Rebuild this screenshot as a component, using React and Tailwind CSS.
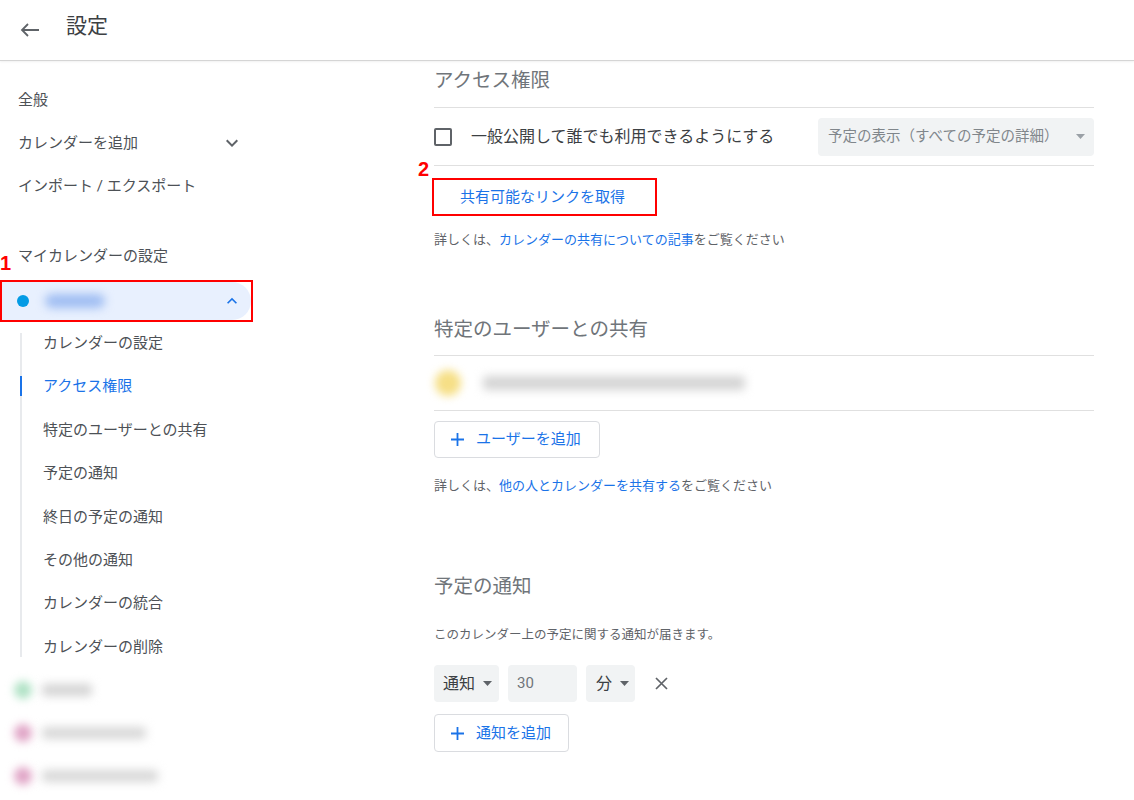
import React from "react";

const BackArrow = () => (
  <svg width="20" height="14" viewBox="0 0 20 14" fill="none">
    <path d="M19 7H2M8 1L2 7L8 13" stroke="#5f6368" strokeWidth="1.8" strokeLinejoin="miter" />
  </svg>
);

const ExpandMore = ({ color = "#5f6368", size = 24 }) => (
  <svg width={size} height={size} viewBox="0 0 24 24">
    <path d="M16.59 8.59L12 13.17 7.41 8.59 6 10l6 6 6-6z" fill={color} />
  </svg>
);

const ExpandLess = ({ color = "#1a73e8", size = 20 }) => (
  <svg width={size} height={size} viewBox="0 0 24 24">
    <path d="M12 8l-6 6 1.41 1.41L12 10.83l4.59 4.58L18 14z" fill={color} />
  </svg>
);

const Tri = ({ color = "#5f6368" }) => (
  <svg width="9" height="5" viewBox="0 0 9 5">
    <path d="M0 0L4.5 5L9 0Z" fill={color} />
  </svg>
);

const Plus = () => (
  <svg width="13" height="13" viewBox="0 0 13 13">
    <path d="M6.5 0V13M0 6.5H13" stroke="#1a73e8" strokeWidth="1.8" />
  </svg>
);

const Close = () => (
  <svg width="13" height="13" viewBox="0 0 13 13">
    <path d="M1 1L12 12M12 1L1 12" stroke="#5f6368" strokeWidth="1.7" />
  </svg>
);

const subItems = [
  "カレンダーの設定",
  "アクセス権限",
  "特定のユーザーとの共有",
  "予定の通知",
  "終日の予定の通知",
  "その他の通知",
  "カレンダーの統合",
  "カレンダーの削除",
];

export default function App() {
  return (
    <div className="w-[1134px] h-[800px] overflow-hidden bg-white font-[Roboto,'Noto_Sans_CJK_JP',sans-serif] text-[#3c4043]">
      {/* Header */}
      <header className="h-[61px] flex items-center border-b border-[#d5d5d5] shadow-[0_1px_2px_rgba(0,0,0,0.06)]">
        <div className="w-[66px] flex justify-center pr-[6px]">
          <BackArrow />
        </div>
        <h1 className="text-[21px] leading-[28px] text-[#3c4043] -mt-[9px]">設定</h1>
      </header>

      <div className="flex">
        {/* Sidebar */}
        <aside className="w-[256px] shrink-0 pt-[17.5px] text-[#4d5156]">
          <div className="flex flex-col">
            <div className="h-[43px] flex items-center pl-[18px] text-[15px]">全般</div>
            <div className="h-[43px] flex items-center pl-[18px] pr-[12px] text-[15px] justify-between">
              <span>カレンダーを追加</span>
              <ExpandMore />
            </div>
            <div className="h-[43px] flex items-center pl-[18px] text-[15px]">インポート / エクスポート</div>
          </div>

          <div className="relative mt-[37.5px] h-[22px] flex items-center pl-[18px] text-[15px]">
            マイカレンダーの設定
          </div>

          <div className="relative mt-[13px] w-[253px] h-[42px] border-2 border-[#ff0000]">
            <span className="absolute -left-[2px] -top-[29px] text-[20px] leading-[20px] font-bold text-[#ff0000] font-['Liberation_Sans',sans-serif]">
              1
            </span>
            <div className="h-full w-[249px] rounded-r-full bg-[#e8f0fe] flex items-center pl-[15px] pr-[9px]">
              <div className="w-[12px] h-[12px] rounded-full bg-[#039be5]" />
              <div className="ml-[16px] w-[60px] h-[14px] rounded-full bg-[#9fbdf2] blur-[5px]" />
              <div className="ml-auto flex">
                <ExpandLess />
              </div>
            </div>
          </div>

          <div className="mt-[11px] ml-[20px] border-l-2 border-[#e8eaed] flex flex-col gap-[23.4px]">
            {subItems.map((t, i) => (
              <div
                key={t}
                className={
                  i === 1
                    ? "-ml-[2px] border-l-2 border-[#1a73e8] h-[20px] leading-[20px] pl-[21px] text-[15px] text-[#1a73e8]"
                    : "h-[20px] leading-[20px] pl-[21px] text-[15px]"
                }
              >
                {t}
              </div>
            ))}
          </div>

          <div className="mt-[11.5px] flex flex-col">
            <div className="h-[43px] flex items-center pl-[14px]">
              <div className="w-[18px] h-[18px] rounded-full bg-[#b0e2c5] blur-[4px]" />
              <div className="ml-[10px] w-[50px] h-[12px] rounded bg-[#d4d4d4] blur-[5px]" />
            </div>
            <div className="h-[43px] flex items-center pl-[14px]">
              <div className="w-[18px] h-[18px] rounded-full bg-[#e0a4c6] blur-[4px]" />
              <div className="ml-[10px] w-[104px] h-[12px] rounded bg-[#d8d8d8] blur-[5px]" />
            </div>
            <div className="h-[43px] flex items-center pl-[14px]">
              <div className="w-[18px] h-[18px] rounded-full bg-[#e0a4c6] blur-[4px]" />
              <div className="ml-[10px] w-[116px] h-[12px] rounded bg-[#d8d8d8] blur-[5px]" />
            </div>
          </div>
        </aside>

        {/* Main */}
        <main className="flex-1 pl-[178px] pt-[6px]">
          <div className="w-[660px]">
            <h2 className="h-[28px] leading-[28px] text-[19.5px] text-[#70757a]">アクセス権限</h2>
            <div className="mt-[12px] h-px bg-[#e0e0e0]" />
            <div className="h-[57px] flex items-center">
              <div className="w-[18px] h-[18px] rounded-[2px] border-2 border-[#5f6368]" />
              <span className="ml-[19px] text-[16px]">一般公開して誰でも利用できるようにする</span>
              <div className="ml-auto w-[276px] h-[38px] rounded-[4px] bg-[#f1f3f4] flex items-center pl-[10px] pr-[9px]">
                <span className="text-[14.5px] text-[#80868b]">予定の表示（すべての予定の詳細）</span>
                <div className="ml-auto">
                  <Tri color="#9aa0a6" />
                </div>
              </div>
            </div>
            <div className="h-px bg-[#e0e0e0]" />

            <div className="relative mt-[12px] -ml-[2px] w-[225px] h-[38px] border-2 border-[#ff0000]">
              <span className="absolute -left-[16px] -top-[21px] text-[20px] leading-[20px] font-bold text-[#ff0000] font-['Liberation_Sans',sans-serif]">
                2
              </span>
              <div className="h-full flex items-center pl-[26px] text-[15px] text-[#1a73e8]">
                共有可能なリンクを取得
              </div>
            </div>

            <p className="mt-[15px] h-[18px] leading-[18px] text-[13px] text-[#5f6368]">
              詳しくは、<span className="text-[#1a73e8]">カレンダーの共有についての記事</span>をご覧ください
            </p>

            <h2 className="mt-[67px] h-[28px] leading-[28px] text-[19.5px] text-[#70757a]">特定のユーザーとの共有</h2>
            <div className="mt-[11px] h-px bg-[#e0e0e0]" />
            <div className="h-[54px] flex items-center">
              <div className="ml-[1px] w-[26px] h-[26px] rounded-full bg-[#f6df86] blur-[4px]" />
              <div className="ml-[22px] w-[262px] h-[14px] rounded bg-[#d4d4d4] blur-[5px]" />
            </div>
            <div className="h-px bg-[#e0e0e0]" />

            <button className="mt-[10px] w-[166px] h-[37px] border border-[#dadce0] rounded-[4px] flex items-center pl-[16px]">
              <Plus />
              <span className="ml-[12px] text-[15px] text-[#1a73e8]">ユーザーを追加</span>
            </button>

            <p className="mt-[19px] h-[18px] leading-[18px] text-[13px] text-[#5f6368]">
              詳しくは、<span className="text-[#1a73e8]">他の人とカレンダーを共有する</span>をご覧ください
            </p>

            <h2 className="mt-[78px] h-[28px] leading-[28px] text-[19.5px] text-[#70757a]">予定の通知</h2>
            <p className="mt-[25px] h-[18px] leading-[18px] text-[12.5px] text-[#5f6368]">
              このカレンダー上の予定に関する通知が届きます。
            </p>

            <div className="mt-[21px] h-[37px] flex items-center">
              <div className="w-[65px] h-full rounded-[4px] bg-[#f1f3f4] flex items-center pl-[9px]">
                <span className="text-[16px] text-[#3c4043]">通知</span>
                <span className="ml-[8px]">
                  <Tri />
                </span>
              </div>
              <div className="ml-[9px] w-[69px] h-full rounded-[4px] bg-[#f1f3f4] flex items-center pl-[9px]">
                <span className="text-[15px] text-[#70757a]">30</span>
              </div>
              <div className="ml-[9px] w-[49px] h-full rounded-[4px] bg-[#f1f3f4] flex items-center pl-[10px]">
                <span className="text-[16px] text-[#3c4043]">分</span>
                <span className="ml-[8px]">
                  <Tri />
                </span>
              </div>
              <div className="ml-[20px] flex">
                <Close />
              </div>
            </div>

            <button className="mt-[12px] w-[135px] h-[38px] border border-[#dadce0] rounded-[4px] flex items-center pl-[16px]">
              <Plus />
              <span className="ml-[12px] text-[15px] text-[#1a73e8]">通知を追加</span>
            </button>
          </div>
        </main>
      </div>
    </div>
  );
}
